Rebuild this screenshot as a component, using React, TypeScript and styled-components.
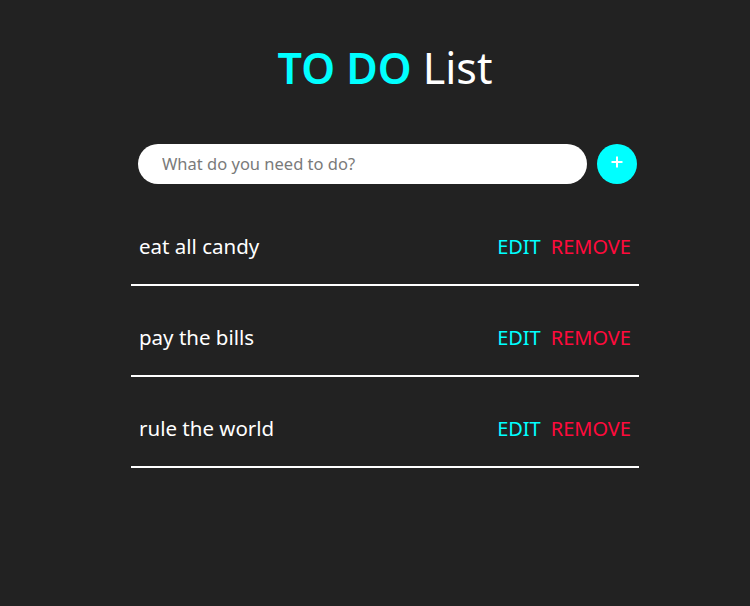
import React, {useState} from "react";
import styled, {createGlobalStyle} from "styled-components";

const GlobalStyle = createGlobalStyle`
  html, body {
    margin: 0;
    padding: 0;
    background: #222222;
  }
  body {
    font-family: "Noto Sans", "Open Sans", sans-serif;
    color: #ffffff;
  }
`

const Page = styled.div`
  display: flex;
  flex-direction: column;
  align-items: center;
  min-height: 606px;
  padding-left: 20px;
  box-sizing: border-box;
`

const Title = styled.h1`
  margin: 40px 0 0;
  font-size: 43px;
  font-weight: 400;
  line-height: 56px;
  color: #ffffff;
`

const Accent = styled.span`
  color: #00ffff;
  font-weight: 600;
`

const Wrapper = styled.div`
  width: 508px;
  display: flex;
  flex-direction: column;
  margin-top: 48px;
`

const Form = styled.form`
  display: flex;
  align-items: center;
  gap: 10px;
  padding: 0 2px 0 7px;
`

const Input = styled.input`
  // sizing
  flex: 1;
  height: 40px;
  margin: 0;
  padding: 0 24px 2px;
  box-sizing: border-box;

  // look
  border: none;
  border-radius: 20px;
  background: #ffffff;
  font-family: inherit;
  font-size: 16.5px;
  color: #333333;
  outline: none;

  &::placeholder {
    color: #7a7a7a;
  }
`

const AddButton = styled.button`
  width: 40px;
  height: 40px;
  flex-shrink: 0;
  border: none;
  border-radius: 50%;
  background: #00ffff;
  display: flex;
  align-items: center;
  justify-content: center;
  padding: 0 0 4px;
  cursor: pointer;
`

const List = styled.ul`
  list-style: none;
  margin: 11px 0 0;
  padding: 0;
`

const Item = styled.li`
  display: flex;
  align-items: center;
  justify-content: space-between;
  height: 74px;
  margin-top: 15px;
  padding: 0 8px 2px;
  box-sizing: content-box;
  height: 72px;
  border-bottom: 2px solid #ffffff;
`

const ItemText = styled.span`
  font-size: 20.5px;
  color: #ffffff;
`

const Actions = styled.div`
  display: flex;
  gap: 10px;
`

const ActionButton = styled.button<{ $danger?: boolean }>`
  background: none;
  border: none;
  padding: 0;
  font-family: inherit;
  font-size: 20px;
  color: ${props => props.$danger ? '#ff0a3c' : '#00ffff'};
  cursor: pointer;
`

const initialTodos = ['eat all candy', 'pay the bills', 'rule the world']

const App: React.FC = () => {
  const [todos, setTodos] = useState<string[]>(initialTodos)
  const [value, setValue] = useState('')

  return (
    <Page>
      <GlobalStyle/>
      <Title><Accent>TO DO</Accent> List</Title>
      <Wrapper>
        <Form onSubmit={(e) => {
          e.preventDefault()
          if (value.trim()) {
            setTodos([...todos, value.trim()])
            setValue('')
          }
        }}>
          <Input
            value={value}
            onChange={(e) => setValue(e.target.value)}
            placeholder={'What do you need to do?'}
          />
          <AddButton type={'submit'} aria-label={'add'}>
            <svg width="12" height="12" viewBox="0 0 12 12">
              <path d="M6 0.5v11M0.5 6h11" stroke="#ffffff" strokeWidth="2"/>
            </svg>
          </AddButton>
        </Form>
        <List>
          {todos.map((todo, i) => (
            <Item key={i}>
              <ItemText>{todo}</ItemText>
              <Actions>
                <ActionButton type={'button'}>EDIT</ActionButton>
                <ActionButton type={'button'} $danger onClick={() => setTodos(todos.filter((_, j) => j !== i))}>
                  REMOVE
                </ActionButton>
              </Actions>
            </Item>
          ))}
        </List>
      </Wrapper>
    </Page>
  )
}

export default App
